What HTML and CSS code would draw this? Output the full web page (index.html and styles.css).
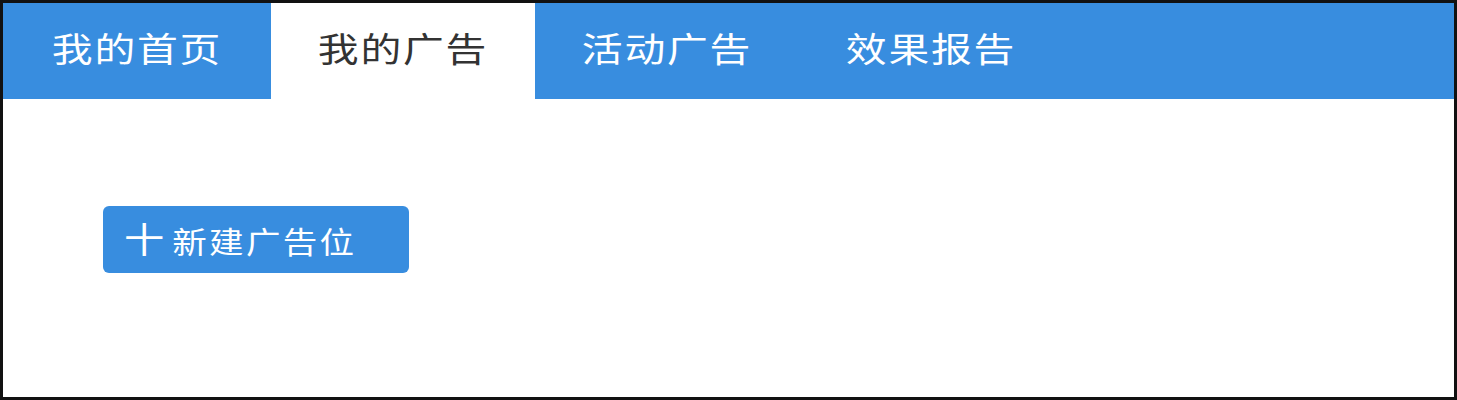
FILE: index.html
```html
<!DOCTYPE html>
<html lang="zh-CN">
<head>
<meta charset="utf-8">
<title>我的广告</title>
<link rel="stylesheet" href="styles.css">
</head>
<body>
<div class="frame">
  <nav class="nav">
    <a class="tab"><span class="tab-label">我的首页</span></a>
    <a class="tab active"><span class="tab-label">我的广告</span></a>
    <a class="tab"><span class="tab-label">活动广告</span></a>
    <a class="tab"><span class="tab-label">效果报告</span></a>
  </nav>
  <main class="content">
    <button class="btn"><span class="btn-label"><span class="plus">十</span>新建广告位</span></button>
  </main>
</div>
</body>
</html>
```
FILE: styles.css
```css
html, body {
  margin: 0;
  padding: 0;
  background: #ffffff;
}
.frame {
  width: 1457px;
  height: 400px;
  box-sizing: border-box;
  border: 3px solid #111111;
  background: #ffffff;
  font-family: "Noto Sans CJK SC", "Noto Sans", sans-serif;
  overflow: hidden;
}
.nav {
  height: 96px;
  background: #388ddf;
  display: flex;
  align-items: stretch;
}
.tab {
  width: 264px;
  display: flex;
  align-items: center;
  justify-content: center;
  color: #ffffff;
  font-size: 34px;
  padding-bottom: 8px;
  box-sizing: border-box;
}
.tab:first-child {
  width: 268px;
}
.tab-label {
  display: inline-block;
  letter-spacing: 1.5px;
  transform: scaleX(1.2);
}
.tab.active {
  background: #ffffff;
  color: #333333;
}
.content {
  padding: 107px 0 0 100px;
}
.btn {
  display: flex;
  align-items: center;
  width: 306px;
  height: 67px;
  background: #388ddf;
  border: none;
  border-radius: 6px;
  color: #ffffff;
  font-family: "Noto Sans CJK SC", "Noto Sans", sans-serif;
  padding: 0 0 4px 21px;
  box-sizing: border-box;
}
.btn-label {
  display: inline-block;
  font-size: 30px;
  letter-spacing: 2px;
  transform: scaleX(1.15);
  transform-origin: left center;
  white-space: nowrap;
}
.plus {
  font-size: 35px;
  margin-right: 5px;
}
```
